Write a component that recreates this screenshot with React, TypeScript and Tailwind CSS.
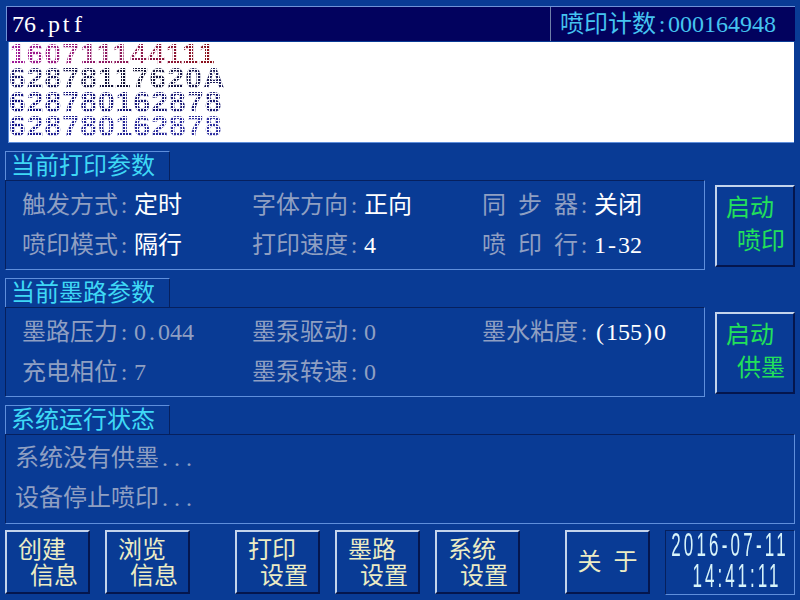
const cjk = "font-['Liberation_Serif','Noto_Sans_CJK_SC',serif]";

const dotRows = [
  { text: '160711144111', color: 'bg-[repeating-linear-gradient(90deg,transparent_0,transparent_2px,#fff_2px,#fff_3px),repeating-linear-gradient(0deg,transparent_0,transparent_2px,#fff_2px,#fff_3px),linear-gradient(90deg,#a0189a_0,#8c1a5a_110px,#8a1010_215px)]' },
  { text: '62878117620A', color: 'bg-[repeating-linear-gradient(90deg,transparent_0,transparent_2px,#fff_2px,#fff_3px),repeating-linear-gradient(0deg,transparent_0,transparent_2px,#fff_2px,#fff_3px),linear-gradient(90deg,#1a1a70_0,#101030_120px,#202060_215px)]' },
  { text: '628780162878', color: 'bg-[repeating-linear-gradient(90deg,transparent_0,transparent_2px,#fff_2px,#fff_3px),repeating-linear-gradient(0deg,transparent_0,transparent_2px,#fff_2px,#fff_3px),linear-gradient(90deg,#101080_0,#1a1a70_215px)]' },
  { text: '628780162878', color: 'bg-[repeating-linear-gradient(90deg,transparent_0,transparent_2px,#fff_2px,#fff_3px),repeating-linear-gradient(0deg,transparent_0,transparent_2px,#fff_2px,#fff_3px),linear-gradient(90deg,#18188c_0,#3030a0_215px)]' },
];

// the panel font is half-width for latin: every ascii char sits on a 12px cell
function Txt({ text }: { text: string }) {
  return (
    <>
      {Array.from(text).map((c, i) =>
        c.charCodeAt(0) < 128 ? (
          <span key={i} className="inline-block w-[12px] text-center whitespace-pre">
            {c}
          </span>
        ) : (
          c
        ),
      )}
    </>
  );
}

function SectionTitle({ title }: { title: string }) {
  return (
    <div className="w-[165px] h-[29px] pl-[5px] border-t border-l border-r border-t-[#5f8fdc] border-l-[#5f8fdc] border-r-[#06205e] text-[24px] leading-[28px] text-[#3fd8f5]">
      {title}
    </div>
  );
}

function Param({ label, value, bright }: { label: string; value: string; bright?: boolean }) {
  return (
    <div className="whitespace-nowrap text-[24px] leading-[40px] text-[#8f9fc2]">
      <Txt text={label + ':'} />
      <span className={`ml-[4px] ${bright ? 'text-white' : ''}`}>
        <Txt text={value} />
      </span>
    </div>
  );
}

function Button({ top, bottom, className, inner, topPad, bottomPad, tone }: { top: string; bottom: string; className: string; inner: string; topPad: string; bottomPad: string; tone: string }) {
  return (
    <div className={`flex flex-col border-2 border-t-[#c4d4ec] border-l-[#c4d4ec] border-b-[#04164e] border-r-[#04164e] text-[24px] ${inner} ${tone} ${className}`}>
      <div className={topPad}>{top}</div>
      <div className={bottomPad}>{bottom}</div>
    </div>
  );
}

function ParamPanel({ title, rows, action }: { title: string; rows: { label: string; value: string; bright?: boolean }[][]; action: string[] }) {
  return (
    <div className="flex flex-col">
      <SectionTitle title={title} />
      <div className="flex">
        <div className="w-[700px] h-[90px] pl-[16px] pt-[4px] border border-t-[#06205e] border-l-[#06205e] border-b-[#5f8fdc] border-r-[#5f8fdc]">
          {rows.map((row, i) => (
            <div key={i} className="grid grid-cols-[230px_230px_230px]">
              {row.map((p) => (
                <Param key={p.label} {...p} />
              ))}
            </div>
          ))}
        </div>
        <Button
          top={action[0]}
          bottom={action[1]}
          tone="text-[#22e05a]"
          inner="pt-[5px] leading-[33px]"
          topPad="pl-[9px]"
          bottomPad="pl-[20px]"
          className="w-[80px] h-[82px] ml-[10px] mt-[5px]"
        />
      </div>
    </div>
  );
}

function NavButton({ top, bottom, className = '' }: { top: string; bottom: string; className?: string }) {
  return (
    <Button
      top={top}
      bottom={bottom}
      tone="text-[#ececc4]"
      inner="pt-[5px] leading-[26px]"
      topPad="pl-[11px]"
      bottomPad="pl-[23px]"
      className={`w-[85px] h-[64px] ${className}`}
    />
  );
}

export default function App() {
  return (
    <div className={`w-[800px] h-[600px] overflow-hidden bg-[#093b95] px-[5px] pt-[6px] ${cjk}`}>
      {/* file name and counter */}
      <div className="flex w-[789px] h-[35px] ml-px bg-[#02025e] border-t border-l border-t-[#6f93d8] border-l-[#6f93d8] text-[24px] leading-[34px]">
        <div className="flex-1 pl-[5px] text-white">
          <Txt text="76.ptf" />
        </div>
        <div className="w-[245px] pl-[9px] border-l border-[#6f7fa8] text-[#45c4f0] whitespace-nowrap">
          <Txt text="喷印计数:000164948" />
        </div>
      </div>

      {/* print preview */}
      <div className="w-[786px] h-[101px] ml-[3px] mt-[1px] bg-white border-l border-b border-l-[#5f8fdc] border-b-[#5f8fdc]">
        {dotRows.map((r, i) => (
          <div
            key={i}
            className={`h-[24px] w-[230px] font-['Liberation_Sans'] font-bold text-[30px] leading-[24px] tracking-[1.1px] text-transparent bg-clip-text ${r.color}`}
          >
            {r.text}
          </div>
        ))}
      </div>

      <div className="mt-[8px]">
        <ParamPanel
          title="当前打印参数"
          action={['启动', '喷印']}
          rows={[
            [
              { label: '触发方式', value: '定时', bright: true },
              { label: '字体方向', value: '正向', bright: true },
              { label: '同 步 器', value: '关闭', bright: true },
            ],
            [
              { label: '喷印模式', value: '隔行', bright: true },
              { label: '打印速度', value: '4', bright: true },
              { label: '喷 印 行', value: '1-32', bright: true },
            ],
          ]}
        />
      </div>

      <div className="mt-[8px]">
        <ParamPanel
          title="当前墨路参数"
          action={['启动', '供墨']}
          rows={[
            [
              { label: '墨路压力', value: '0.044' },
              { label: '墨泵驱动', value: '0' },
              { label: '墨水粘度', value: '(155)0', bright: true },
            ],
            [
              { label: '充电相位', value: '7' },
              { label: '墨泵转速', value: '0' },
            ],
          ]}
        />
      </div>

      <div className="mt-[8px]">
        <SectionTitle title="系统运行状态" />
        <div className="w-[790px] h-[90px] pl-[9px] pt-[3px] border border-t-[#06205e] border-l-[#06205e] border-b-[#5f8fdc] border-r-[#5f8fdc] text-[24px] leading-[40px] text-[#8f9fc2]">
          <div>
            <Txt text="系统没有供墨..." />
          </div>
          <div>
            <Txt text="设备停止喷印..." />
          </div>
        </div>
      </div>

      {/* bottom buttons */}
      <div className="flex mt-[6px]">
        <NavButton top="创建" bottom="信息" />
        <NavButton top="浏览" bottom="信息" className="ml-[15px]" />
        <NavButton top="打印" bottom="设置" className="ml-[45px]" />
        <NavButton top="墨路" bottom="设置" className="ml-[15px]" />
        <NavButton top="系统" bottom="设置" className="ml-[15px]" />
        <div className="flex items-center justify-center w-[85px] h-[64px] ml-[45px] border-2 border-t-[#c4d4ec] border-l-[#c4d4ec] border-b-[#04164e] border-r-[#04164e] text-[24px] text-[#ececc4]">
          <span>
            <Txt text="关 于" />
          </span>
        </div>
        <div className="flex flex-col items-center w-[130px] h-[65px] ml-[15px] pt-[1px] border border-t-[#06205e] border-l-[#06205e] border-b-[#5f8fdc] border-r-[#5f8fdc] font-['Liberation_Sans'] text-[17px] text-[#d8f4fa]">
          <div className="h-[16px] mt-[7px] mb-[8px] leading-[16px] tracking-[3.2px] scale-y-[1.9] whitespace-nowrap">2016-07-11</div>
          <div className="h-[16px] mt-[7px] mb-[8px] leading-[16px] tracking-[3px] scale-y-[1.9] whitespace-nowrap pl-[14px]">14:41:11</div>
        </div>
      </div>
    </div>
  );
}
